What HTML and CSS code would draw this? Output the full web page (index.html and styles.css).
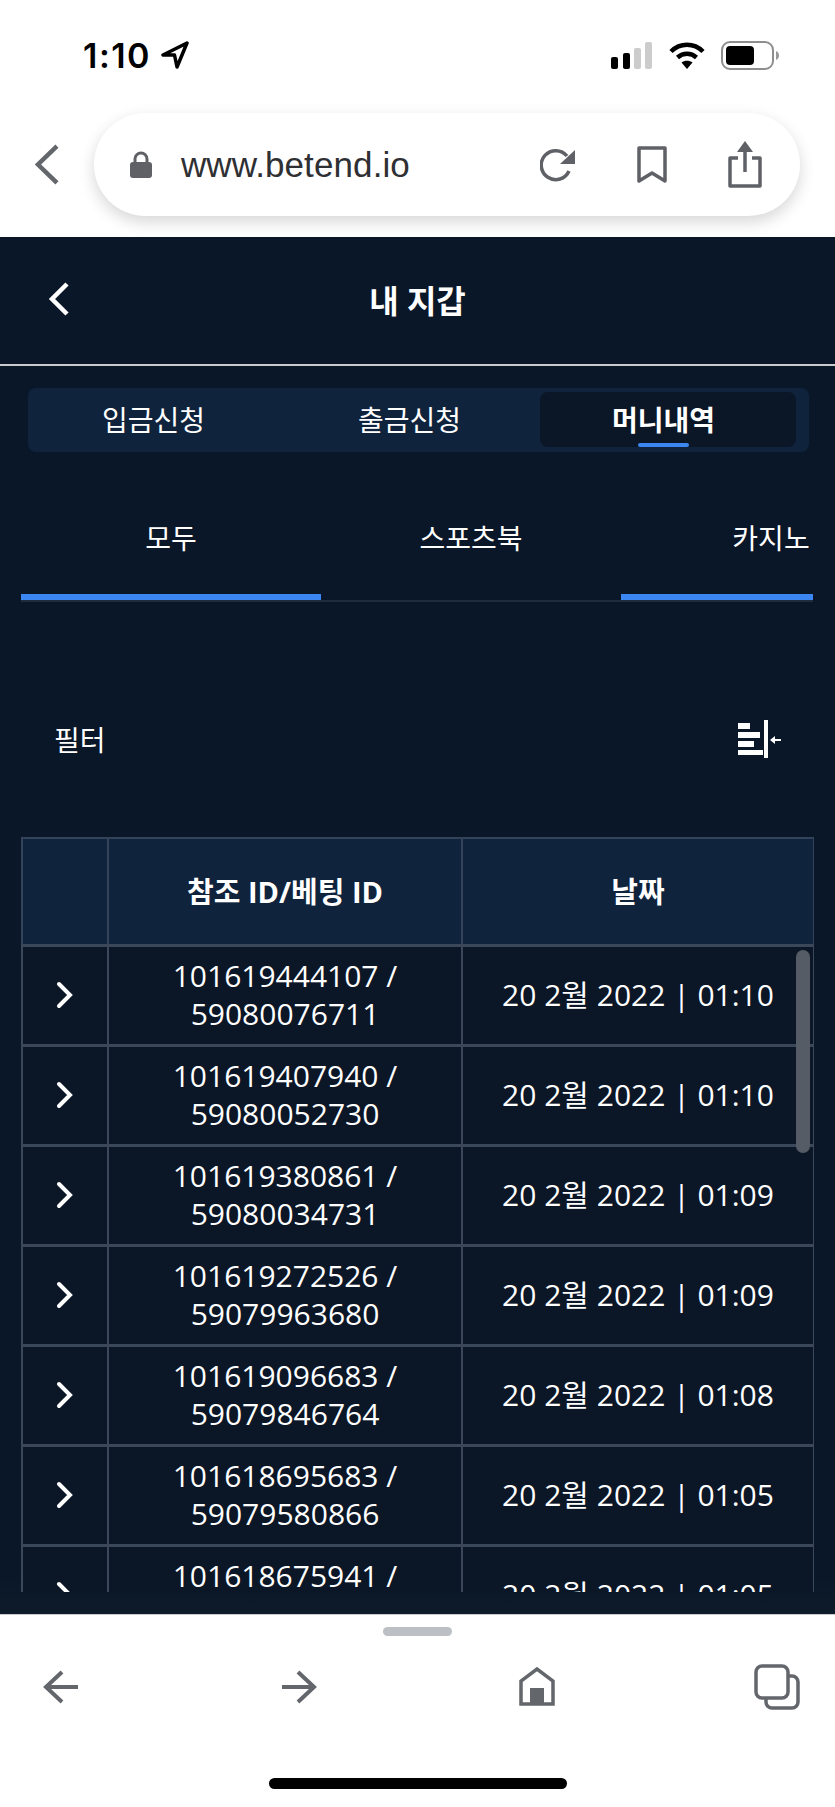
FILE: index.html
```html
<!DOCTYPE html>
<html lang="ko">
<head>
    <meta charset="UTF-8">
    <meta name="viewport" content="width=device-width, initial-scale=1.0">
    <title>내 지갑</title>
    <link rel="stylesheet" href="styles.css">
</head>
<body>
    <div class="top">
        <div class="status">
            <div class="status_left">
                <span class="time">1:10</span>
                <svg class="loc" width="28" height="28" viewBox="0 0 28 28"><path d="M26 2 2 14h11.500L16 26z" fill="none" stroke="#000" stroke-width="3.500" stroke-linejoin="round"/></svg>
            </div>
            <div class="status_right">
                <svg width="42" height="27" viewBox="0 0 42 27">
                    <rect x="0" y="15" width="7" height="12" rx="2" fill="#000"/>
                    <rect x="12" y="11" width="7" height="16" rx="2" fill="#000"/>
                    <rect x="23" y="6" width="7" height="21" rx="2" fill="#ccc"/>
                    <rect x="34" y="0" width="7" height="27" rx="2" fill="#ccc"/>
                </svg>
                <svg width="36" height="27" viewBox="0 0 36 27">
                    <path d="M2 9.500C11 .5 25 .5 34 9.500" fill="none" stroke="#000" stroke-width="4.500"/>
                    <path d="M8.500 15.500C14 10.500 22 10.500 27.500 15.500" fill="none" stroke="#000" stroke-width="4.500"/>
                    <path d="M12.500 20.500c3-2.500 8-2.500 11 0L18 27z" fill="#000"/>
                </svg>
                <svg width="59" height="29" viewBox="0 0 59 29">
                    <rect x="1" y="1" width="51" height="27" rx="8" fill="none" stroke="#8e8e8e" stroke-width="2"/>
                    <rect x="5" y="5" width="28" height="19" rx="4" fill="#000"/>
                    <path d="M55 10c2 .7 3 2.500 3 4.500s-1 3.800-3 4.500z" fill="#999"/>
                </svg>
            </div>
        </div>
        <div class="browser">
            <svg class="browser_back" width="24" height="41" viewBox="0 0 24 41"><path d="M22 2 3 20.500 22 39" fill="none" stroke="#63666b" stroke-width="4.500"/></svg>
            <div class="address">
                <svg class="lock" width="22" height="27" viewBox="0 0 22 27">
                    <path d="M5 12V8a6 6 0 0 1 12 0v4" fill="none" stroke="#5f6167" stroke-width="3"/>
                    <rect x="0" y="11" width="22" height="16" rx="3" fill="#5f6167"/>
                </svg>
                <span class="url">www.betend.io</span>
                <div class="address_icons">
                    <svg width="36" height="36" viewBox="0 0 36 36">
                        <path d="M29 24a14.500 14.500 0 1 1-2-15" fill="none" stroke="#5f6167" stroke-width="3.500"/>
                        <path d="M35 3v14H20z" fill="#5f6167"/>
                    </svg>
                    <svg width="30" height="38" viewBox="0 0 30 38"><path d="M2 2h26v33L15 27 2 35z" fill="none" stroke="#5f6167" stroke-width="3.500" stroke-linejoin="round"/></svg>
                    <svg width="34" height="47" viewBox="0 0 34 47">
                        <path d="M10 17H2v28h30V17h-8" fill="none" stroke="#5f6167" stroke-width="3.500" stroke-linejoin="round"/>
                        <path d="M17 3v28" stroke="#5f6167" stroke-width="3.500"/>
                        <path d="M17 0l8 11H9z" fill="#5f6167"/>
                    </svg>
                </div>
            </div>
        </div>
    </div>

    <div class="main">
        <div class="header">
            <svg class="header_back" width="22" height="34" viewBox="0 0 22 34"><path d="M19 2 4 17l15 15" fill="none" stroke="#fff" stroke-width="4.500"/></svg>
            <span class="title">내 지갑</span>
        </div>

        <div class="tabs">
            <div class="tab">입금신청</div>
            <div class="tab">출금신청</div>
            <div class="tab tab_active">머니내역</div>
        </div>

        <div class="subtabs">
            <div class="subtab subtab_active">모두</div>
            <div class="subtab">스포츠북</div>
            <div class="subtab subtab_active">카지노</div>
        </div>

        <div class="filter">
            <span>필터</span>
            <svg width="43" height="38" viewBox="0 0 43 38">
                <rect x="0" y="3" width="12" height="6" fill="#fff"/>
                <rect x="0" y="12" width="22" height="6" fill="#fff"/>
                <rect x="0" y="21" width="16" height="6" fill="#fff"/>
                <rect x="0" y="30" width="25" height="5" fill="#fff"/>
                <rect x="26" y="0" width="4" height="38" fill="#fff"/>
                <path d="M33 20h10" stroke="#fff" stroke-width="2"/>
                <path d="M32 20l5-4v8z" fill="#fff"/>
            </svg>
        </div>

        <div class="table_wrap">
            <table>
                <colgroup>
                    <col class="col_arrow">
                    <col class="col_id">
                    <col class="col_date">
                </colgroup>
                <tr>
                    <th></th>
                    <th>참조 ID/베팅 ID</th>
                    <th>날짜</th>
                </tr>
                <tr>
                    <td><svg class="chev" width="18" height="28" viewBox="0 0 18 28"><path d="M3 3l11 11L3 25" fill="none" stroke="#fff" stroke-width="4" stroke-linecap="round"/></svg></td>
                    <td>101619444107 /<br>59080076711</td>
                    <td>20 2월 2022 | 01:10</td>
                </tr>
                <tr>
                    <td><svg class="chev" width="18" height="28" viewBox="0 0 18 28"><path d="M3 3l11 11L3 25" fill="none" stroke="#fff" stroke-width="4" stroke-linecap="round"/></svg></td>
                    <td>101619407940 /<br>59080052730</td>
                    <td>20 2월 2022 | 01:10</td>
                </tr>
                <tr>
                    <td><svg class="chev" width="18" height="28" viewBox="0 0 18 28"><path d="M3 3l11 11L3 25" fill="none" stroke="#fff" stroke-width="4" stroke-linecap="round"/></svg></td>
                    <td>101619380861 /<br>59080034731</td>
                    <td>20 2월 2022 | 01:09</td>
                </tr>
                <tr>
                    <td><svg class="chev" width="18" height="28" viewBox="0 0 18 28"><path d="M3 3l11 11L3 25" fill="none" stroke="#fff" stroke-width="4" stroke-linecap="round"/></svg></td>
                    <td>101619272526 /<br>59079963680</td>
                    <td>20 2월 2022 | 01:09</td>
                </tr>
                <tr>
                    <td><svg class="chev" width="18" height="28" viewBox="0 0 18 28"><path d="M3 3l11 11L3 25" fill="none" stroke="#fff" stroke-width="4" stroke-linecap="round"/></svg></td>
                    <td>101619096683 /<br>59079846764</td>
                    <td>20 2월 2022 | 01:08</td>
                </tr>
                <tr>
                    <td><svg class="chev" width="18" height="28" viewBox="0 0 18 28"><path d="M3 3l11 11L3 25" fill="none" stroke="#fff" stroke-width="4" stroke-linecap="round"/></svg></td>
                    <td>101618695683 /<br>59079580866</td>
                    <td>20 2월 2022 | 01:05</td>
                </tr>
                <tr>
                    <td><svg class="chev" width="18" height="28" viewBox="0 0 18 28"><path d="M3 3l11 11L3 25" fill="none" stroke="#fff" stroke-width="4" stroke-linecap="round"/></svg></td>
                    <td>101618675941 /<br>&nbsp;</td>
                    <td>20 2월 2022 | 01:05</td>
                </tr>
            </table>
            <div class="scrollbar"></div>
        </div>
    </div>

    <div class="bottom">
        <div class="handle"></div>
        <div class="bottom_icons">
            <svg width="36" height="34" viewBox="0 0 36 34"><path d="M19 2 3 17l16 15M4 17h31" fill="none" stroke="#63666b" stroke-width="4"/></svg>
            <svg width="36" height="34" viewBox="0 0 36 34"><path d="M17 2l16 15-16 15M32 17H1" fill="none" stroke="#63666b" stroke-width="4"/></svg>
            <svg width="36" height="39" viewBox="0 0 36 39">
                <path d="M2 37V14L18 2l16 12v23z" fill="none" stroke="#63666b" stroke-width="3.500"/>
                <rect x="11" y="21" width="14" height="16" fill="#63666b"/>
            </svg>
            <svg class="tabs_icon" width="46" height="46" viewBox="0 0 46 46">
                <rect x="12" y="12" width="32" height="32" rx="6" fill="none" stroke="#63666b" stroke-width="3.500"/>
                <rect x="2" y="2" width="32" height="32" rx="6" fill="#fff" stroke="#63666b" stroke-width="3.500"/>
            </svg>
        </div>
        <div class="home_bar"></div>
    </div>
</body>
</html>
```

FILE: styles.css
```css
body{
    margin: 0;
    width: 835px;
    height: 1807px;
    display: flex;
    flex-direction: column;
    overflow: hidden;
    background-color: white;
    font-family: "Open Sans", "Noto Sans CJK KR", sans-serif;
}

.top{
    height: 237px;
    background-color: white;
}

.status{
    height: 110px;
    padding: 0 55px 0 83px;
    display: flex;
    justify-content: space-between;
    align-items: center;
}

.status_left{
    display: flex;
    align-items: center;
    gap: 10px;
}

.status_right{
    display: flex;
    align-items: center;
    gap: 16px;
}

.time{
    font-family: Inter, sans-serif;
    font-size: 34px;
    font-weight: 600;
    letter-spacing: 1.5px;
    color: black;
}

.browser{
    margin-top: 3px;
    padding: 0 35px;
    display: flex;
    align-items: center;
    gap: 35px;
}

.address{
    width: 707px;
    height: 103px;
    box-sizing: border-box;
    padding: 0 38px 0 36px;
    display: flex;
    align-items: center;
    border-radius: 52px;
    background-color: white;
    box-shadow: 0 6px 16px rgba(0, 0, 0, 0.16);
}

.url{
    margin-left: 29px;
    font-family: "Liberation Sans", sans-serif;
    font-size: 35px;
    letter-spacing: 0.1px;
    color: #2f3033;
}

.address_icons{
    margin-left: auto;
    display: flex;
    align-items: center;
    gap: 61px;
}

.main{
    height: 1377px;
    background: linear-gradient(#0a1728 1340px, #0d1b2a);
    color: white;
}

.header{
    height: 129px;
    padding-left: 48px;
    padding-bottom: 4px;
    box-sizing: border-box;
    display: flex;
    align-items: center;
    position: relative;
    border-bottom: 2px solid #c9cbcd;
}

.title{
    position: absolute;
    left: 0;
    right: 0;
    text-align: center;
    font-size: 32px;
    font-weight: 700;
}

.tabs{
    margin: 22px 26px 0 28px;
    height: 64px;
    box-sizing: border-box;
    padding: 4px 13px 5px 0;
    display: flex;
    border-radius: 8px;
    background-color: #10233d;
}

.tab{
    flex: 1;
    display: flex;
    justify-content: center;
    align-items: center;
    font-size: 28px;
    padding: 0 5px 2px 0;
    position: relative;
}

.tab_active{
    flex: none;
    width: 256px;
    box-sizing: border-box;
    padding-right: 9px;
    border-radius: 8px;
    font-weight: 700;
    background-color: #0b1626;
}

.tab_active::after{
    content: "";
    position: absolute;
    bottom: 0;
    left: 98px;
    width: 51px;
    height: 4px;
    border-radius: 2px;
    background-color: #3b86f0;
}

.subtabs{
    margin: 51px 22px 0 21px;
    height: 97px;
    display: flex;
    overflow: hidden;
    border-bottom: 2px solid #1f2c3d;
}

.subtab{
    flex: none;
    width: 300px;
    height: 90px;
    padding-bottom: 22px;
    display: flex;
    justify-content: center;
    align-items: center;
    font-size: 28px;
    box-sizing: border-box;
}

.subtab_active{
    border-bottom: 6px solid #3b86f0;
    height: 97px;
    padding-bottom: 23px;
}

.filter{
    margin-top: 117px;
    padding: 0 54px;
    display: flex;
    justify-content: space-between;
    align-items: center;
    font-size: 28px;
}

.table_wrap{
    margin: 77px 21px 0 21px;
    height: 756px;
    overflow: hidden;
    position: relative;
}

table{
    width: 792px;
    margin-top: 1px;
    table-layout: fixed;
    border-collapse: collapse;
}

.col_arrow{
    width: 86px;
}

.col_id{
    width: 354px;
}

.col_date{
    width: 352px;
}

th{
    height: 107px;
    padding: 0 0 2px;
    box-sizing: border-box;
    border: 2px solid #33445a;
    background-color: #10233d;
    font-size: 29px;
    font-weight: 700;
}

td{
    height: 100px;
    box-sizing: border-box;
    padding: 0;
    border: 2px solid #3a4859;
    border-top-width: 3px;
    border-bottom-width: 3px;
    text-align: center;
    font-size: 30px;
    line-height: 38px;
    background-color: #0b1626;
}

.chev{
    display: block;
    margin: 0 auto;
}

.scrollbar{
    position: absolute;
    top: 114px;
    right: 4px;
    width: 14px;
    height: 203px;
    border-radius: 7px;
    background-color: #555c66;
}

.bottom{
    flex: 1;
    border-top: 1px solid #c9cbcd;
    background-color: white;
}

.handle{
    width: 69px;
    height: 9px;
    margin: 12px auto 0;
    border-radius: 5px;
    background-color: #bcc0c5;
}

.bottom_icons{
    margin-top: 27px;
    padding-left: 43px;
    height: 47px;
    display: flex;
    gap: 202px;
    align-items: center;
}

.tabs_icon{
    margin-left: -3px;
}

.home_bar{
    width: 298px;
    height: 11px;
    margin: 68px auto 0;
    border-radius: 6px;
    background-color: black;
}
```
